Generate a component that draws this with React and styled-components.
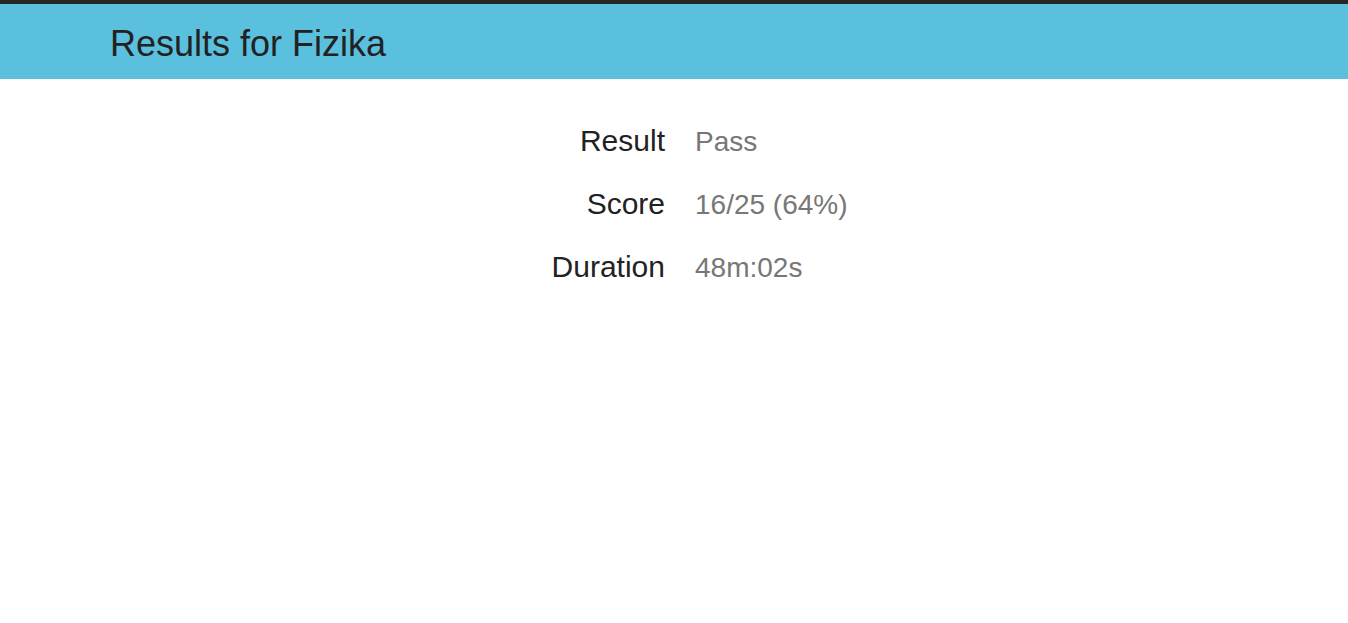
import React from "react";
import styled, { createGlobalStyle } from "styled-components";

const Global = createGlobalStyle`
  html, body { margin: 0; padding: 0; background: #fff; }
  body { font-family: "Liberation Sans", Arial, sans-serif; color: #222; }
`;

const Page = styled.div`
  display: flex;
  flex-direction: column;
  min-height: 623px;
`;

const TopBar = styled.div`
  height: 4px;
  background: #272727;
`;

const Header = styled.header`
  height: 75px;
  background: #5bc0de;
  display: flex;
  align-items: center;
  padding-left: 110px;
`;

const Title = styled.h1`
  margin: 0;
  font-size: 36px;
  font-weight: 400;
  color: #222;
  line-height: 1;
  padding-top: 5px;
`;

const Details = styled.dl`
  margin: 0;
  padding-top: 41px;
  display: grid;
  grid-template-columns: 680px 1fr;
  align-items: baseline;
  row-gap: 20px;
`;

const Label = styled.dt`
  margin: 0;
  padding-right: 15px;
  text-align: right;
  font-size: 30px;
  line-height: 42px;
  color: #222;
`;

const Value = styled.dd`
  margin: 0;
  padding-left: 15px;
  font-size: 28px;
  line-height: 42px;
  color: #777;
`;

const rows = [
  ["Result", "Pass"],
  ["Score", "16/25 (64%)"],
  ["Duration", "48m:02s"],
];

export default function App() {
  return (
    <Page>
      <Global />
      <TopBar />
      <Header>
        <Title>Results for Fizika</Title>
      </Header>
      <Details>
        {rows.map(([k, v]) => (
          <React.Fragment key={k}>
            <Label>{k}</Label>
            <Value>{v}</Value>
          </React.Fragment>
        ))}
      </Details>
    </Page>
  );
}
